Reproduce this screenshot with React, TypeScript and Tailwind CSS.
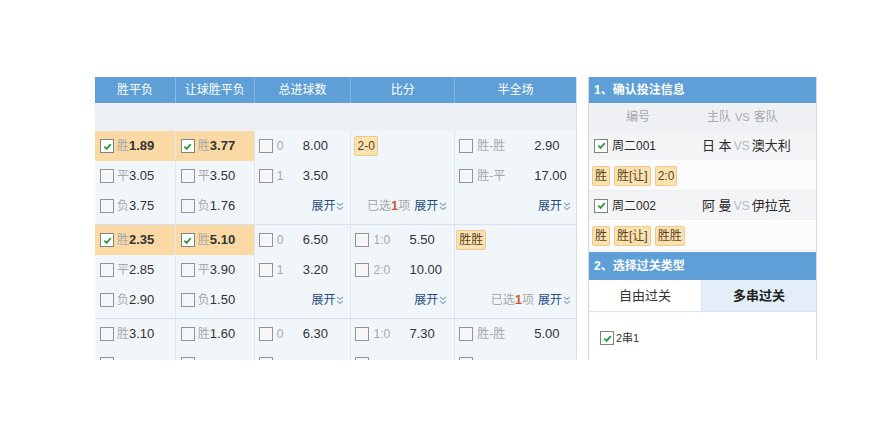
import React from "react";

const font = "font-['Liberation_Sans','Noto_Sans_CJK_SC',sans-serif]";

function Box({ checked = false }: { checked?: boolean }) {
  return (
    <span
      className={`inline-flex size-[14px] shrink-0 items-center justify-center border ${
        checked ? "border-[#7b877e] bg-white" : "border-[#8f959b] bg-[#f6f6f6]"
      }`}
    >
      {checked && (
        <svg viewBox="0 0 10 10" className="size-[9px]">
          <path d="M1.5 5.2 L4 7.6 L8.6 2.4" fill="none" stroke="#2f9a3a" strokeWidth="2" />
        </svg>
      )}
    </span>
  );
}

function Expand() {
  return (
    <span className="inline-flex items-center text-[12px] text-[#1f4d80]">
      展开
      <svg viewBox="0 0 8 9" className="ml-[1px] h-[9px] w-[8px]">
        <path d="M1 1 L4 3.5 L7 1 M1 5 L4 7.5 L7 5" fill="none" stroke="#8ea6c0" strokeWidth="1.2" />
      </svg>
    </span>
  );
}

function Picked() {
  return (
    <span className="mr-[4px] text-[12px] text-[#a8a8a8]">
      已选<b className="text-[13px] text-[#c9582c]">1</b>项
    </span>
  );
}

function Tag({ children }: { children: React.ReactNode }) {
  return (
    <span className="inline-flex h-[20px] items-center rounded-[2px] border border-[#efc98a] bg-[#fbe2b3] px-[2px] text-[12px] text-[#5a4220]">
      {children}
    </span>
  );
}

type Odd = { label: string; value: string; checked?: boolean };

function WdlCell({ o, hot }: { o: Odd; hot: boolean }) {
  return (
    <div className={`flex h-[30px] items-center pl-[5px] ${hot ? "bg-[#fad9a5]" : ""}`}>
      <Box checked={o.checked} />
      {o.value && (
        <>
          <span className="ml-[3px] text-[12px] text-[#a8a8a8]">{o.label}</span>
          <span className={`text-[13px] text-[#333] ${o.checked ? "font-bold" : ""}`}>{o.value}</span>
        </>
      )}
    </div>
  );
}

function PlainCell({ o, labelW }: { o?: Odd; labelW: string }) {
  if (!o) return <div className="h-[30px]" />;
  return (
    <div className="flex h-[30px] items-center pl-[4px]">
      <Box />
      {o.value && (
        <>
          <span className={`ml-[4px] text-[12px] text-[#a8a8a8] ${labelW}`}>{o.label}</span>
          <span className="text-[13px] text-[#333]">{o.value}</span>
        </>
      )}
    </div>
  );
}

type Match = {
  wdl: Odd[];
  hwdl: Odd[];
  goals: Odd[];
  score: (Odd | null)[];
  scoreTag?: string;
  half: (Odd | null)[];
  halfTag?: string;
};

const matches: Match[] = [
  {
    wdl: [
      { label: "胜", value: "1.89", checked: true },
      { label: "平", value: "3.05" },
      { label: "负", value: "3.75" },
    ],
    hwdl: [
      { label: "胜", value: "3.77", checked: true },
      { label: "平", value: "3.50" },
      { label: "负", value: "1.76" },
    ],
    goals: [
      { label: "0", value: "8.00" },
      { label: "1", value: "3.50" },
    ],
    score: [null, null],
    scoreTag: "2-0",
    half: [
      { label: "胜-胜", value: "2.90" },
      { label: "胜-平", value: "17.00" },
    ],
  },
  {
    wdl: [
      { label: "胜", value: "2.35", checked: true },
      { label: "平", value: "2.85" },
      { label: "负", value: "2.90" },
    ],
    hwdl: [
      { label: "胜", value: "5.10", checked: true },
      { label: "平", value: "3.90" },
      { label: "负", value: "1.50" },
    ],
    goals: [
      { label: "0", value: "6.50" },
      { label: "1", value: "3.20" },
    ],
    score: [
      { label: "1:0", value: "5.50" },
      { label: "2:0", value: "10.00" },
    ],
    half: [null, null],
    halfTag: "胜胜",
  },
  {
    wdl: [
      { label: "胜", value: "3.10" },
      { label: "平", value: "" },
      { label: "负", value: "" },
    ],
    hwdl: [
      { label: "胜", value: "1.60" },
      { label: "平", value: "" },
      { label: "负", value: "" },
    ],
    goals: [
      { label: "0", value: "6.30" },
      { label: "1", value: "" },
    ],
    score: [
      { label: "1:0", value: "7.30" },
      { label: "2:0", value: "" },
    ],
    half: [
      { label: "胜-胜", value: "5.00" },
      { label: "胜-平", value: "" },
    ],
  },
];

const heads = [
  { t: "胜平负", w: "w-[81px]" },
  { t: "让球胜平负", w: "w-[79px]" },
  { t: "总进球数", w: "w-[97px]" },
  { t: "比分", w: "w-[104px]" },
  { t: "半全场", w: "w-[121px]" },
];

function MatchBlock({ m, last }: { m: Match; last: boolean }) {
  const col = "flex flex-col border-r border-[#dfe7ef] pb-[3px]";
  return (
    <div className="flex border-b border-[#d9e2ec]">
      <div className={`${col} w-[81px]`}>
        {m.wdl.map((o, i) => (
          <WdlCell key={i} o={o} hot={i === 0 && !!o.checked} />
        ))}
      </div>
      <div className={`${col} w-[79px]`}>
        {m.hwdl.map((o, i) => (
          <WdlCell key={i} o={o} hot={i === 0 && !!o.checked} />
        ))}
      </div>
      <div className={`${col} w-[97px]`}>
        {m.goals.map((o, i) => (
          <PlainCell key={i} o={o} labelW="w-[26px]" />
        ))}
        <div className="flex h-[30px] items-center justify-end pr-[6px]">{!last && <Expand />}</div>
      </div>
      <div className={`${col} w-[104px]`}>
        {m.scoreTag ? (
          <>
            <div className="flex h-[30px] items-center pl-[3px]">
              <Tag>{m.scoreTag}</Tag>
            </div>
            <div className="h-[30px]" />
          </>
        ) : (
          m.score.map((o, i) => <PlainCell key={i} o={o ?? undefined} labelW="w-[36px]" />)
        )}
        <div className="flex h-[30px] items-center justify-end pr-[7px]">
          {m.scoreTag && <Picked />}
          {!last && <Expand />}
        </div>
      </div>
      <div className={`${col} w-[121px] border-r-0`}>
        {m.halfTag ? (
          <>
            <div className="flex h-[30px] items-center pl-[1px]">
              <Tag>{m.halfTag}</Tag>
            </div>
            <div className="h-[30px]" />
          </>
        ) : (
          m.half.map((o, i) => <PlainCell key={i} o={o ?? undefined} labelW="w-[57px]" />)
        )}
        <div className="flex h-[30px] items-center justify-end pr-[5px]">
          {m.halfTag && <Picked />}
          {!last && <Expand />}
        </div>
      </div>
    </div>
  );
}

function OddsTable() {
  return (
    <div className="w-[482px] shrink-0 border-r border-[#d5dde6] bg-[#f1f6fb]">
      <div className="flex h-[26px] bg-[#5d9fd6]">
        {heads.map((h, i) => (
          <div
            key={h.t}
            className={`${h.w} flex items-center justify-center text-[12px] text-white ${
              i < 4 ? "border-r border-[#86b8e2]" : ""
            }`}
          >
            {h.t}
          </div>
        ))}
      </div>
      <div className="h-[28px] bg-[#edf0f4]" />
      {matches.map((m, i) => (
        <MatchBlock key={i} m={m} last={i === matches.length - 1} />
      ))}
    </div>
  );
}

function TeamRow({ no, home, away }: { no: string; home: string; away: string }) {
  return (
    <div className="flex h-[30px] items-center border-b border-white bg-[#f3f4f6] text-[#2a2a2a]">
      <div className="flex w-[113px] items-center pl-[5px] text-[12px]">
        <Box checked />
        <span className="ml-[4px]">{no}</span>
      </div>
      <div className="whitespace-nowrap text-[13px]">
        {home}
        <span className="mx-[2px] text-[12px] text-[#b5bcc4]">VS</span>
        {away}
      </div>
    </div>
  );
}

function TagRow({ tags }: { tags: string[] }) {
  return (
    <div className="flex h-[30px] items-center gap-[4px] border-b border-[#eceef1] bg-[#fbfbfb] pl-[3px]">
      {tags.map((t) => (
        <Tag key={t}>{t}</Tag>
      ))}
    </div>
  );
}

function BetPanel() {
  return (
    <div className="flex w-[229px] shrink-0 flex-col border-x border-[#d3d9e0] bg-white">
      <div className="flex h-[26px] items-center bg-[#5d9fd6] pl-[5px] text-[12px] font-bold text-white">
        1、确认投注信息
      </div>
      <div className="flex h-[28px] items-center bg-[#eef0f3] text-[12px] text-[#a5a9ae]">
        <div className="w-[98px] text-center">编号</div>
        <div className="pl-[20px]">
          主队<span className="mx-[4px] text-[11px]">VS</span>客队
        </div>
      </div>
      <TeamRow no="周二001" home="日 本" away="澳大利" />
      <TagRow tags={["胜", "胜[让]", "2:0"]} />
      <TeamRow no="周二002" home="阿 曼" away="伊拉克" />
      <TagRow tags={["胜", "胜[让]", "胜胜"]} />
      <div className="mt-[1px] flex h-[28px] items-center bg-[#5d9fd6] pl-[5px] text-[12px] font-bold text-white">
        2、选择过关类型
      </div>
      <div className="flex h-[32px] border-b border-[#dbe4ee] text-[13px]">
        <div className="flex w-[112px] items-center justify-center bg-white text-[#333]">自由过关</div>
        <div className="flex flex-1 items-center justify-center border-l border-[#dbe4ee] bg-[#e3eef9] font-bold text-[#222]">
          多串过关
        </div>
      </div>
      <div className="flex items-center pl-[11px] pt-[18px] text-[11px] text-[#333]">
        <Box checked />
        <span className="ml-[2px]">2串1</span>
      </div>
    </div>
  );
}

export default function App() {
  return (
    <div className={`h-[447px] w-[894px] bg-white ${font}`}>
      <div className="flex h-[360px] gap-[11px] overflow-hidden pl-[95px] pt-[77px]">
        <OddsTable />
        <BetPanel />
      </div>
    </div>
  );
}
